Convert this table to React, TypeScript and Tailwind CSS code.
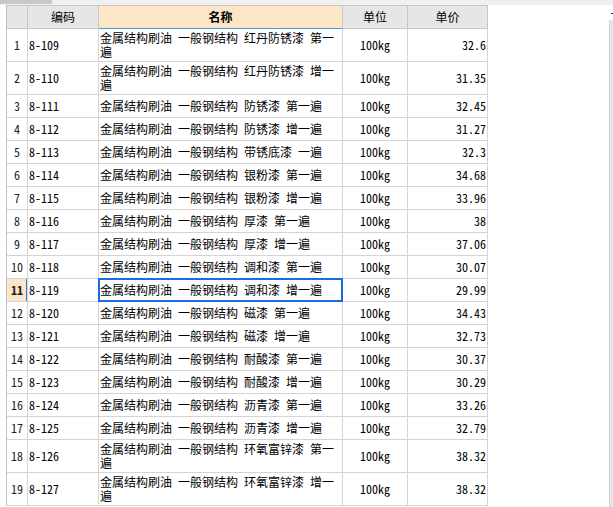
const rows: [string, string, string][] = [
  ["8-109", "红丹防锈漆 第一遍", "32.6"],
  ["8-110", "红丹防锈漆 增一遍", "31.35"],
  ["8-111", "防锈漆 第一遍", "32.45"],
  ["8-112", "防锈漆 增一遍", "31.27"],
  ["8-113", "带锈底漆 一遍", "32.3"],
  ["8-114", "银粉漆 第一遍", "34.68"],
  ["8-115", "银粉漆 增一遍", "33.96"],
  ["8-116", "厚漆 第一遍", "38"],
  ["8-117", "厚漆 增一遍", "37.06"],
  ["8-118", "调和漆 第一遍", "30.07"],
  ["8-119", "调和漆 增一遍", "29.99"],
  ["8-120", "磁漆 第一遍", "34.43"],
  ["8-121", "磁漆 增一遍", "32.73"],
  ["8-122", "耐酸漆 第一遍", "30.37"],
  ["8-123", "耐酸漆 增一遍", "30.29"],
  ["8-124", "沥青漆 第一遍", "33.26"],
  ["8-125", "沥青漆 增一遍", "32.79"],
  ["8-126", "环氧富锌漆 第一遍", "38.32"],
  ["8-127", "环氧富锌漆 增一遍", "38.32"],
];

const font =
  "font-['Noto_Sans_Mono_CJK_SC','Liberation_Mono','Noto_Sans_CJK_SC',monospace]";

const cell = "border-r border-b border-[#d4d4d4] min-h-[23px] flex items-center";
const head =
  "h-[24px] border-t border-r border-b border-[#c8c8c8] bg-[#e6e6e6] flex items-center justify-center";

export default function App() {
  const selected = 11;

  return (
    <div className={`w-[613px] h-[507px] overflow-hidden bg-white text-[12px] text-black ${font}`}>
      <div className="h-[5px] bg-[#f0f0f0]">
        <div className="h-[4px] w-[52px] bg-[#c8c8c8]" />
      </div>

      <div className="flex">
        <div className="pl-[6px]">
          <div className="grid grid-cols-[21px_71px_244px_65px_80px] border-l border-[#c0c0c0]">
            <div className={head} />
            <div className={head}>编码</div>
            <div className="h-[24px] border-t border-r border-b border-t-[#c8c8c8] border-r-[#c8c8c8] border-b-[#3d9cf2] bg-[#fde6c6] flex items-center justify-center font-bold">
              名称
            </div>
            <div className={head}>单位</div>
            <div className={head}>单价</div>

            {rows.map(([code, name, price], i) => {
              const n = i + 1;
              const active = n === selected;
              return [
                <div
                  key={`n${n}`}
                  className={`${cell} justify-center text-[#222] ${
                    active
                      ? "bg-[#fde6c6] font-bold shadow-[inset_-1px_0_0_#2b7de9]"
                      : ""
                  }`}
                >
                  {n}
                </div>,
                <div key={`c${n}`} className={`${cell} pl-[1px]`}>
                  {code}
                </div>,
                <div key={`m${n}`} className={`${cell} relative pl-[1px] py-[2px] leading-[14px]`}>
                  <span>金属结构刷油 一般钢结构 {name}</span>
                  {active && (
                    <div className="absolute -top-px -left-px -right-px -bottom-px border-2 border-[#1a6be6]" />
                  )}
                </div>,
                <div key={`u${n}`} className={`${cell} justify-center`}>
                  100kg
                </div>,
                <div key={`p${n}`} className={`${cell} justify-end pr-[1px]`}>
                  {price}
                </div>,
              ];
            })}
          </div>
        </div>

        <div className="flex-1" />

        <div className="w-[4px] flex flex-col">
          <div className="h-[15px] flex flex-col justify-end">
            <div className="h-px w-[2px] ml-[2px] bg-[#333] mb-[6px]" />
          </div>
          <div className="h-[500px] border-l border-[#cfcfcf] bg-[#e6e6e6]" />
        </div>
      </div>
    </div>
  );
}
